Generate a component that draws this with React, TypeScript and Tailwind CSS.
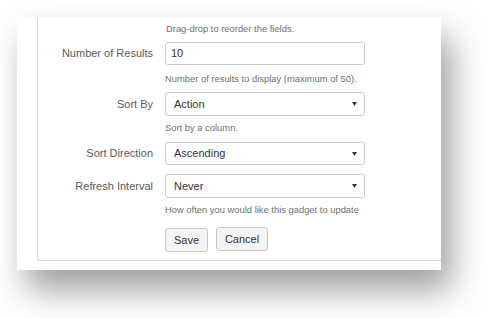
import React from "react";

function Arrow() {
  return (
    <svg width="5" height="4" viewBox="0 0 5 4" className="absolute right-[7px] top-1/2 -translate-y-1/2">
      <path d="M0 0 H5 L2.5 4 Z" fill="#333" />
    </svg>
  );
}

function Select({ value, h }: { value: string; h: string }) {
  return (
    <div className={`relative w-[200px] ${h} border border-[#ccc] rounded-[3px] bg-white flex items-center pl-[8px] text-[11px] text-[#333]`}>
      {value}
      <Arrow />
    </div>
  );
}

function Label({ children }: { children: React.ReactNode }) {
  return <div className="w-[115px] text-right text-[11px] text-[#5a5a5a] pr-0">{children}</div>;
}

export default function App() {
  return (
    <div className="w-[489px] h-[318px] bg-white pt-[17px] pl-[17px]" style={{ fontFamily: '"Liberation Sans", Arial, sans-serif' }}>
      <div className="w-[424px] h-[253px] bg-white overflow-hidden shadow-[10px_20px_32px_rgba(0,0,0,0.38)] pl-[20px]">
        <div className="w-[480px] border-l border-b border-[#d6d6d6] rounded-bl-[3px] pb-[8px]">
          <div className="pl-[128px] pt-[5px] h-[18px] text-[9.4px] leading-[13px] text-[#707070]">Drag-drop to reorder the fields.</div>
          <div className="flex items-center mt-[7px]">
            <Label>Number of Results</Label>
            <div className="ml-[12px] w-[200px] h-[23px] border border-[#ccc] rounded-[3px] bg-white flex items-center pl-[5px] text-[11px] text-[#333]">10</div>
          </div>
          <div className="pl-[127px] mt-[7px] text-[9.4px] leading-[13px] text-[#707070]">Number of results to display (maximum of 50).</div>
          <div className="flex items-center mt-[7px]">
            <Label>Sort By</Label>
            <div className="ml-[12px]"><Select value="Action" h="h-[24px]" /></div>
          </div>
          <div className="pl-[127px] mt-[5px] text-[9.4px] leading-[13px] text-[#707070]">Sort by a column.</div>
          <div className="flex items-center mt-[8px]">
            <Label>Sort Direction</Label>
            <div className="ml-[12px]"><Select value="Ascending" h="h-[23px]" /></div>
          </div>
          <div className="flex items-center mt-[9px]">
            <Label>Refresh Interval</Label>
            <div className="ml-[12px]"><Select value="Never" h="h-[24px]" /></div>
          </div>
          <div className="pl-[127px] mt-[5px] text-[9.4px] leading-[13px] text-[#707070]">How often you would like this gadget to update</div>
          <div className="flex items-end pl-[127px] mt-[11px] gap-[8px]">
            <div className="w-[43px] h-[24px] border border-[#c8c8c8] rounded-[3px] bg-[#f4f4f4] flex items-center justify-center text-[11px] text-[#333]">Save</div>
            <div className="w-[52px] h-[24px] mb-[1px] border border-[#c8c8c8] rounded-[3px] bg-[#f4f4f4] flex items-center justify-center text-[11px] text-[#333]">Cancel</div>
          </div>
        </div>
      </div>
    </div>
  );
}
